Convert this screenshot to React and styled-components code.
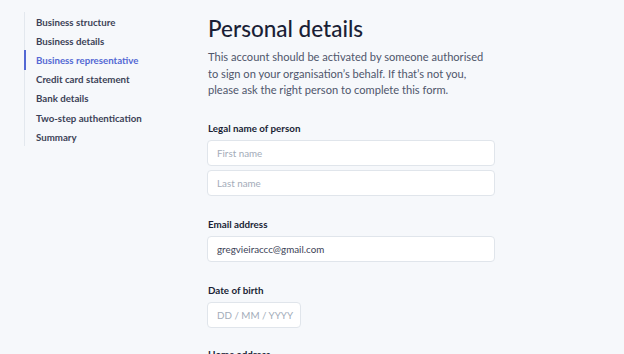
import React from "react";
import styled, { createGlobalStyle } from "styled-components";

const Global = createGlobalStyle`
  html, body { margin: 0; padding: 0; background: #f6f8fb; }
  body { font-family: Lato, "Noto Sans", sans-serif; color: #3c4257; }
  * { box-sizing: border-box; }
`;

const Page = styled.div`
  display: grid;
  grid-template-columns: 208px 288px;
  width: 624px;
  height: 354px;
  overflow: hidden;
`;

const Sidebar = styled.nav`
  padding: 12px 0 0 24px;
`;

const NavList = styled.ul`
  list-style: none;
  margin: 0;
  padding: 0;
  border-left: 1px solid #e3e8ee;
`;

const NavItem = styled.li`
  height: 19.2px;
  display: flex;
  align-items: center;
  padding-left: 10px;
  margin-left: -1px;
  border-left: 2px solid ${(p) => (p.$active ? "#5469d4" : "transparent")};
  font-size: 9.7px;
  font-weight: 700;
  color: ${(p) => (p.$active ? "#5469d4" : "#3c4257")};
  white-space: nowrap;
`;

const Main = styled.main`
  padding-top: 13px;
  display: flex;
  flex-direction: column;
`;

const Title = styled.h1`
  margin: 0 0 4px;
  font-size: 22.5px;
  line-height: 32px;
  font-weight: 500;
  color: #1a1f36;
`;

const Lead = styled.p`
  margin: 0;
  font-size: 11.1px;
  line-height: 16.5px;
  color: #4f566b;
  white-space: nowrap;
`;

const Field = styled.div`
  display: flex;
  flex-direction: column;
  gap: 4px;
  margin-top: ${(p) => p.$mt || 21}px;
`;

const Label = styled.div`
  font-size: 9.8px;
  font-weight: 700;
  line-height: 14px;
  color: #1a1f36;
  margin: 0 0 1px 0;
`;

const Input = styled.div`
  height: 26px;
  width: ${(p) => p.$w || 288}px;
  margin-left: -1px;
  background: #ffffff;
  border: 1px solid #e0e5eb;
  border-radius: 4px;
  display: flex;
  align-items: center;
  padding-left: 9px;
  font-size: 9.8px;
  white-space: pre;
  color: ${(p) => (p.$value ? "#3c4257" : "#a3acb9")};
`;

export default function App() {
  const nav = [
    "Business structure",
    "Business details",
    "Business representative",
    "Credit card statement",
    "Bank details",
    "Two-step authentication",
    "Summary",
  ];
  return (
    <>
      <Global />
      <Page>
        <Sidebar>
          <NavList>
            {nav.map((n) => (
              <NavItem key={n} $active={n === "Business representative"}>
                {n}
              </NavItem>
            ))}
          </NavList>
        </Sidebar>
        <Main>
          <Title>Personal details</Title>
          <Lead>
            This account should be activated by someone authorised
            <br />
            to sign on your organisation’s behalf. If that’s not you,
            <br />
            please ask the right person to complete this form.
          </Lead>
          <Field $mt={22}>
            <Label>Legal name of person</Label>
            <Input>First name</Input>
            <Input>Last name</Input>
          </Field>
          <Field>
            <Label>Email address</Label>
            <Input $value>gregvieiraccc@gmail.com</Input>
          </Field>
          <Field>
            <Label>Date of birth</Label>
            <Input $w={94}>DD / MM / YYYY</Input>
          </Field>
          <Field $mt={19}>
            <Label>Home address</Label>
          </Field>
        </Main>
      </Page>
    </>
  );
}
